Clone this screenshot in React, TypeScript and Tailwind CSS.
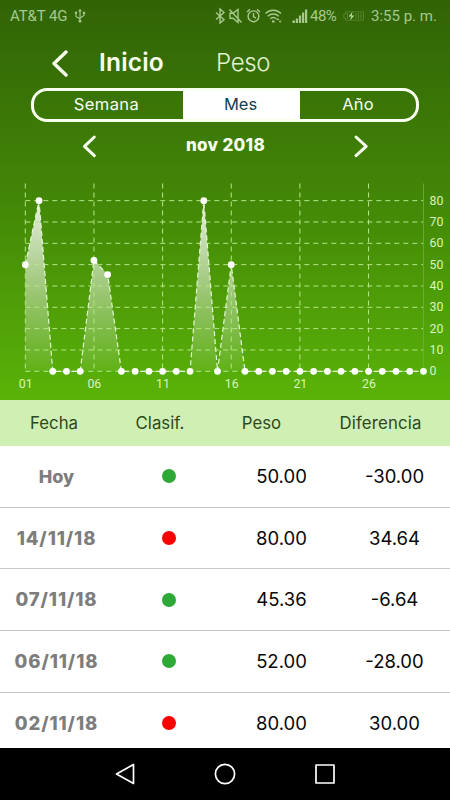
const readings: Record<number, number> = {
  1: 50,
  2: 80,
  6: 52,
  7: 45.36,
  14: 80,
  16: 50,
};

const rows = [
  { date: "Hoy", ok: true, weight: "50.00", diff: "-30.00" },
  { date: "14/11/18", ok: false, weight: "80.00", diff: "34.64" },
  { date: "07/11/18", ok: true, weight: "45.36", diff: "-6.64" },
  { date: "06/11/18", ok: true, weight: "52.00", diff: "-28.00" },
  { date: "02/11/18", ok: false, weight: "80.00", diff: "30.00" },
];

// Chart scale
const BASE = 196.3;
const dayX = (day: number) => 25.3 + (day - 1) * 13.73;
const valueY = (value: number) => BASE - value * 2.133;

const points = Array.from({ length: 30 }, (_, i) => ({
  x: dayX(i + 1),
  y: valueY(readings[i + 1] ?? 0),
}));
const line = points.map((p) => `${p.x},${p.y}`).join(" ");

function StatusBar() {
  return (
    <div className="flex h-8 items-center pl-[10px] font-[Roboto,sans-serif] text-[15px] text-[#a7c98d]">
      <span className="w-[59px] whitespace-nowrap text-[15px] tracking-[-0.1px]">AT&amp;T 4G</span>
      <svg className="ml-[5px]" width="12" height="16" viewBox="0 0 12 16" fill="none" stroke="currentColor" strokeWidth="1.1">
        <path d="M6 2v11M2 5v3.5l4 2.5M10 5v2.5L6 10" />
        <path d="M6 0.8 4.2 3.5h3.6z" fill="currentColor" stroke="none" />
        <circle cx="2" cy="4.8" r="1.2" fill="currentColor" stroke="none" />
        <path d="M8.9 3.8h2.2v2.2H8.9z" fill="currentColor" stroke="none" />
        <circle cx="6" cy="13.2" r="1.4" fill="currentColor" stroke="none" />
      </svg>
      <svg className="ml-[129px] shrink-0" width="67" height="18" viewBox="0 0 67 18" fill="none" stroke="currentColor" strokeWidth="1.4">
        {/* bluetooth */}
        <path d="m1 5.5 8 7.2-4 3.3V2l4 3.4L1 12.5" />
        {/* muted */}
        <path d="M15 6.3h3l5-3.8v13l-5-4.2h-3zM14.5 2.5l12 13" />
        {/* alarm */}
        <circle cx="38.5" cy="9.3" r="5.4" />
        <path d="M38.5 6v3.6l2.4 1.6M32 5l3-2.8M45 5l-3-2.8" />
        {/* wifi */}
        <path d="M50.5 6.5c4.5-4.3 11-4.3 15.5 0M52.8 9.2c3.2-3 7.7-3 11 0M55.2 11.8c1.9-1.7 4.2-1.7 6 0" />
        <path d="M57 13.5h2.6v2H57zM61 13l1.7-2 1.7 2zM63.5 13.8h3.2l-1.6 2z" fill="currentColor" stroke="none" />
      </svg>
      <svg className="ml-[10px] shrink-0" width="16" height="16" viewBox="0 0 16 16" fill="currentColor">
        <path d="M.5 12.5H3V15H.5zM3.8 10.5H6V15H3.8zM6.9 7.5h2.2V15H6.9zM10 4.5h2.2V15H10zM13 1.5h2.2V15H13z" />
      </svg>
      <span className="ml-[2px] w-[28px] text-[15px] tracking-[-0.5px]">48%</span>
      <svg className="ml-[5px] shrink-0 opacity-80" width="22" height="10" viewBox="0 0 22 10" fill="none" stroke="currentColor">
        <path d="M2.5 3V.8h18v8.4h-18V7H.8V3z" opacity=".35" />
        <path d="M13 2v6M15.5 2v6M18 2v6M4.5 2v6" opacity=".4" />
        <path d="M9.5.8 5.5 5.6h2.7L7 9.4l4.5-5H8.8z" fill="#d1efb8" stroke="none" />
      </svg>
      <span className="ml-[6px] whitespace-nowrap text-[15px]">3:55 p. m.</span>
    </div>
  );
}

function WeightChart() {
  return (
    <svg className="block" width="450" height="225" viewBox="0 0 450 225">
      <defs>
        <linearGradient id="area" gradientUnits="userSpaceOnUse" x1="0" y1="25" x2="0" y2="196">
          <stop offset="0" stopColor="#fff" stopOpacity=".88" />
          <stop offset="1" stopColor="#fff" stopOpacity=".06" />
        </linearGradient>
      </defs>
      <polygon points={`${dayX(1)},${BASE} ${line} ${dayX(30)},${BASE}`} fill="url(#area)" />
      <g stroke="#b5e68a" strokeWidth="1" strokeDasharray="5 4">
        {[0, 10, 20, 30, 40, 50, 60, 70, 80].map((v) => (
          <path key={v} d={`M${dayX(1)} ${valueY(v)}H423`} />
        ))}
        {[1, 6, 11, 16, 21, 26].map((d) => (
          <path key={d} d={`M${dayX(d)} 8.5V${BASE}`} />
        ))}
      </g>
      <path d="M423.5 8.5V196" stroke="#74ad45" strokeOpacity=".8" />
      <polyline points={line} fill="none" stroke="#e4f6d4" strokeWidth="1.2" strokeDasharray="5 3" />
      {points.map((p) => (
        <circle key={p.x} cx={p.x} cy={p.y} r="3.4" fill="#fff" />
      ))}
      <g fill="#d7f5bd" fontFamily="Roboto, sans-serif" fontSize="12.3">
        {[0, 10, 20, 30, 40, 50, 60, 70, 80].map((v) => (
          <text key={v} x="429.5" y={valueY(v) + 4}>
            {v}
          </text>
        ))}
        {["01", "06", "11", "16", "21", "26"].map((label) => (
          <text key={label} x={dayX(Number(label)) + 0.4} y="213" textAnchor="middle">
            {label}
          </text>
        ))}
      </g>
    </svg>
  );
}

function NavBar() {
  return (
    <div className="flex h-[52px] items-center justify-center gap-[76px] bg-black">
      <svg width="24" height="24" viewBox="0 0 24 24" fill="none" stroke="#fff" strokeWidth="1.7" strokeLinejoin="round">
        <path d="M20.5 2.5v19L3.5 12z" />
      </svg>
      <svg width="24" height="24" viewBox="0 0 24 24" fill="none" stroke="#fff" strokeWidth="1.7">
        <circle cx="12" cy="12" r="9.6" />
      </svg>
      <svg width="24" height="24" viewBox="0 0 24 24" fill="none" stroke="#fff" strokeWidth="1.7" strokeLinejoin="round">
        <path d="M3 3h18v18H3z" />
      </svg>
    </div>
  );
}

export default function App() {
  return (
    <div className="flex h-[800px] w-[450px] flex-col overflow-hidden bg-white font-[Inter,sans-serif]">
      <header className="h-[400px] bg-linear-to-b from-[#316306] via-[#418307] via-45% to-[#5ab308] text-[#f8ffef]">
        <StatusBar />
        <div className="flex h-14 items-center pt-[5px]">
          <svg className="ml-[50px]" width="20" height="28" viewBox="0 0 20 28" fill="none" stroke="currentColor" strokeWidth="3.4" strokeLinecap="round" strokeLinejoin="round">
            <path d="M16 3 4 14.5 16 26" />
          </svg>
          <h1 className="ml-[29px] w-[117px] text-[24.5px] font-semibold tracking-[0.2px]">Inicio</h1>
          <span className="text-[24px] font-light tracking-[-0.3px] text-[#e0f2cf]">Peso</span>
        </div>
        <div className="mx-[31px] flex h-[34px] overflow-hidden rounded-[16px] border-[3px] border-[#f8ffef] text-[16.5px] leading-[27px]">
          <div className="w-[149px] pr-1 text-center tracking-[0.4px]">Semana</div>
          <div className="w-[117px] bg-white pr-0.5 text-center text-[#113f50]">Mes</div>
          <div className="flex-1 text-center tracking-[0.2px]">Año</div>
        </div>
        <div className="flex h-[53px] items-center justify-between pr-[80px] pb-[5px] pl-[81px]">
          <svg width="17" height="24" viewBox="0 0 17 24" fill="none" stroke="currentColor" strokeWidth="3" strokeLinecap="round" strokeLinejoin="round">
            <path d="M13.3 3 3.5 12.3 13.3 21.6" />
          </svg>
          <span className="text-[17px] font-extrabold tracking-[0.3px]">nov 2018</span>
          <svg width="17" height="24" viewBox="0 0 17 24" fill="none" stroke="currentColor" strokeWidth="3" strokeLinecap="round" strokeLinejoin="round">
            <path d="M3 3 13.2 12.3 3 21.6" />
          </svg>
        </div>
        <WeightChart />
      </header>

      <div className="flex h-[46px] shrink-0 items-center bg-[#d0efb3] pt-0.5 text-[16.8px] text-[#2d491c]">
        <span className="w-[108px] text-center">Fecha</span>
        <span className="w-[104px] text-center">Clasif.</span>
        <span className="w-[99px] text-center">Peso</span>
        <span className="flex-1 text-center tracking-[0.15px]">Diferencia</span>
      </div>

      <div className="h-[302px] overflow-hidden">
        {rows.map((row) => (
          <div key={row.date} className="flex h-[61.7px] items-center border-b border-[#c6c6c6] text-[18.5px] text-[#080808]">
            <span className={`w-[113px] pt-px text-center font-extrabold text-[#7d7d7d] ${row.date === "Hoy" ? "text-[18px]" : "tracking-[0.9px]"}`}>
              {row.date}
            </span>
            <span className="flex w-[111px] justify-center">
              <span className={`size-[14px] rounded-full ${row.ok ? "bg-[#2ea836]" : "bg-[#fa0000]"}`} />
            </span>
            <span className="w-[115px] pt-px text-center">{row.weight}</span>
            <span className="w-[111px] pt-px text-center">{row.diff}</span>
          </div>
        ))}
      </div>
      <NavBar />
    </div>
  );
}
